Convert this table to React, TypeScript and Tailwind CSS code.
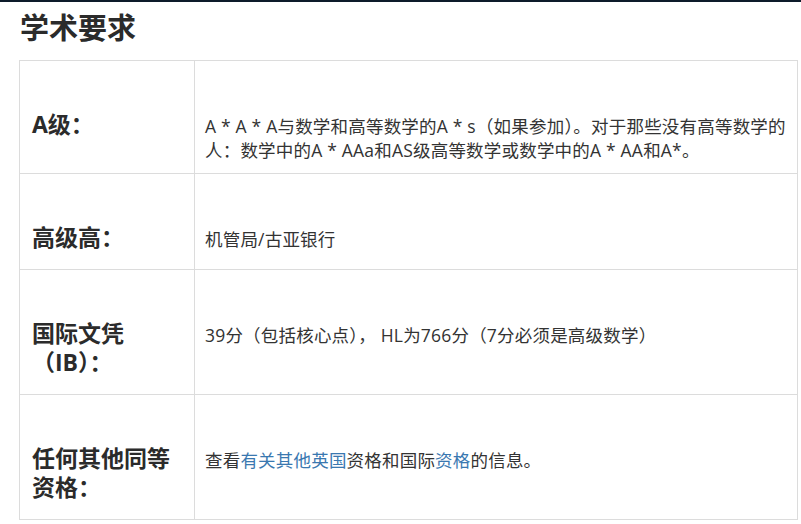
import React from 'react';

const rows: { label: React.ReactNode; body: React.ReactNode }[] = [
    {
        label: 'A级：',
        body: 'A * A * A与数学和高等数学的A * s（如果参加）。对于那些没有高等数学的人：数学中的A * AAa和AS级高等数学或数学中的A * AA和A*。',
    },
    { label: '高级高：', body: '机管局/古亚银行' },
    { label: '国际文凭（IB）：', body: '39分（包括核心点）， HL为766分（7分必须是高级数学）' },
    {
        label: '任何其他同等资格：',
        body: (
            <>
                查看<a href="#" className="text-[#3a78b0]">有关其他英国</a>资格和国际<a href="#" className="text-[#3a78b0]">资格</a>的信息。
            </>
        ),
    },
];

export default function App() {
    return (
        <div className="w-[801px] h-[524px] bg-white overflow-hidden text-[#333] font-['Open_Sans','Noto_Sans_CJK_SC',sans-serif]">
            <div className="h-[2px] bg-[#0d1b2a]" />
            <h2 className="ml-[20px] mt-[8px] text-[29px] leading-[35px] font-bold text-[#2b2b2b]">学术要求</h2>

            <table className="ml-[19px] mt-[15px] w-[779px] border-collapse table-fixed">
                <colgroup>
                    <col className="w-[175px]" />
                    <col />
                </colgroup>
                <tbody>
                    {rows.map((row, i) => (
                        <tr key={i}>
                            <td className="align-baseline border border-[#dcdcdc] pl-[12px] pr-[12px] pt-[49px] pb-[17px] text-[23px] leading-[29px] font-bold text-[#2b2b2b]">
                                {row.label}
                            </td>
                            <td className="align-baseline border border-[#dcdcdc] pl-[10px] pr-[10px] pt-[4px] pb-[11px] text-[17.5px] leading-[24px] tracking-[0.2px]">
                                {row.body}
                            </td>
                        </tr>
                    ))}
                </tbody>
            </table>
        </div>
    );
}
